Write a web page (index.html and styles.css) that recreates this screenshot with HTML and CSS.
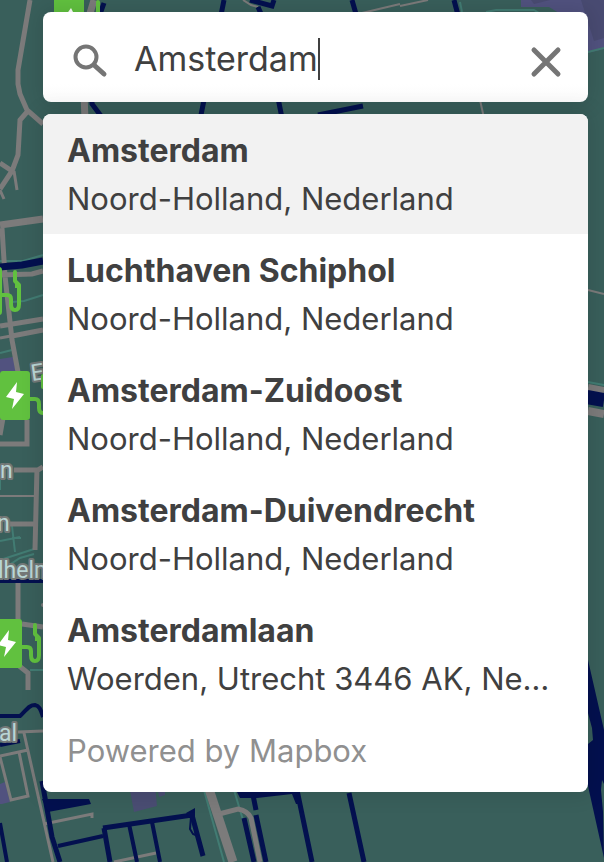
FILE: index.html
```html
<!DOCTYPE html>
<html lang="nl">
<head>
<meta charset="utf-8">
<meta name="viewport" content="width=device-width, initial-scale=1">
<title>Laadpalen zoeken</title>
<link rel="stylesheet" href="styles.css">
</head>
<body>
<svg class="map" viewBox="0 0 604 862" preserveAspectRatio="xMinYMin slice" aria-hidden="true">
  <rect width="604" height="862" fill="#395f5b"/>

  <g fill="#51527f">
    <path d="M521 0H604V49L587 53V30L549 7L521 7Z"/>
    <path d="M0 359L13 357L16 372H0Z"/>
    <path d="M0 784L5 782L10 802L2 804H0Z"/>
    <path d="M129 785L155 785L157 806L134 812Z" fill="#4a4d73"/>
    <path d="M157 785H165V795L159 797Z" fill="#4a4d73"/>
  </g>
  <path d="M581 0H604V38L594 41Z M531 0H550L534 4Z" fill="#494b72"/>

  <g fill="none" stroke="#427c73" stroke-width="2">
    <path d="M0 261L23 261L43 255M0 353L12 350M12 302L24 301L43 295M0 541L20 537M12 526L15 552M12 538L21 538M0 560L34 549M0 571L20 558L34 554M460 2L462 12M486 12L496 10H534L539 13M588 52L604 48M588 382L604 385M234 790L243 820M204 790L224 862M30 670H43M0 480V490"/>
  </g>

  <g fill="none" stroke="#7c7b7b">
    <path stroke-width="5" d="M30 0L18 70V84L20 94L27 110L43 124M27 112L20 120L18 155L12 171L0 189M12 171L0 163"/>
    <path stroke-width="3" d="M14 171L17 190M0 190L4 199M0 338L43 330"/>
    <path stroke-width="7" d="M0 225L43 219"/>
    <path stroke-width="5" d="M2 228L5 276L12 340L18 372M0 275L32 274L43 271M0 326L43 319M12 336L43 330M27 420V444H0M3 418L0 435M14 470L38 470L43 467M37 468L35 550M10 524H35M18 575V620M22 624L43 627M18 665L28 673V690"/>
    <path stroke-width="2" d="M0 496H36"/>
    <path stroke-width="3" d="M18 732L43 731M24 733L53 862M0 756L28 750M0 757L11 800L28 796L19 752M44 824L92 814V818M114 862L156 853"/>
    <path stroke-width="9" d="M208 786L233 862"/>
    <path stroke-width="5" d="M219 814L238 809Q248 811 251 818L260 862"/>
    <path stroke-width="7" d="M94 0L82 40L85 120"/>
    <path stroke-width="2" d="M400 6L428 0M362 13L400 4M480 100L484 118M588 290L604 294M243 0L251 5L258 7"/>
    <path stroke-width="8" d="M588 388L604 391M588 411L604 414"/>
  </g>
  <circle cx="43" cy="605" r="2" fill="#7c7b7b"/>

  <g fill="none" stroke="#03104f">
    <path stroke-width="7" d="M0 267L22 265L43 261"/>
    <path stroke-width="4" d="M0 716H20C28 708 30 705 35 705C40 706 41 711 43 717M0 745L20 741M0 581H43M0 823L7 862M58 846L103 836M129 824L137 862M152 822L160 862"/>
    <path stroke-width="5" d="M42 781L52 837L60 862M103 828L192 815L203 856M104 828L110 862M244 818L254 862M256 815L266 862M252 790L256 810M297 790L312 862M349 793L364 862M104 3L90 42L92 104L104 120M224 0L200 120M250 0L272 6L274 0M258 7L262 16M352 0L356 14M278 98L282 118M318 115L363 106M454 0L458 15"/>
    <path stroke-width="2" d="M191 817L190 829L193 834L198 836M258 7L262 20"/>
    <path stroke-width="14" d="M587 397L604 400"/>
  </g>
  <g fill="#03104f">
    <path d="M42 799L89 799L91 804L48 812Z M186 813L195 808V825Z M236 790H300V804H296L292 794L257 798H240Z"/>
    <path d="M588 660L604 730V784L602 780L601 790L603 812L604 858L588 786V744L593 740L592 728L588 713Z"/>
  </g>

  <g class="labels" font-size="23">
    <text x="32" y="381" transform="rotate(-8 32 381)">E</text>
    <text x="0" y="478">n</text>
    <text x="-3" y="531">n</text>
    <text x="-2" y="578">lhelm</text>
    <text x="-1" y="741">al</text>
  </g>

  <g fill="#61c13f">
    <path d="M54 0H84V20H54Z"/>
    <rect x="-27" y="267" width="29" height="48" rx="3"/>
    <rect x="0" y="371" width="30" height="49" rx="3"/>
    <rect x="-7" y="619" width="29" height="49" rx="3"/>
  </g>
  <g fill="none" stroke="#61c13f" stroke-width="4" stroke-linecap="round" stroke-linejoin="round">
    <path d="M15 272V281L19 285V304Q19 310 15 310Q11 310 11 304V299Q11 295 7 295H0"/>
    <path d="M43 376V387M30 399H35Q39 399 39 404V408Q39 413 43 413"/>
    <path d="M35 625V634L39 638V655Q39 661 35 661Q31 661 31 655V651Q31 647 27 647H22"/>
    <path d="M98 2V20"/>
  </g>
  <path d="M15 280L20 284V288H15Z M35 633L40 637V641H35Z" fill="#61c13f"/>
  <g fill="#fff">
    <path d="M17 382L6 397L14 399L12 409L24 394L16 392Z"/>
    <path d="M9 630L-2 645L6 647L4 657L16 642L8 640Z"/>
    <path d="M71 8L61 22H68L73 12Z"/>
  </g>
</svg>

<main class="geocoder">
  <form class="search" role="search">
    <svg class="search-icon" viewBox="0 0 36 36" aria-hidden="true">
      <circle cx="14" cy="14" r="10.5"/>
      <path d="M22 22L32 31"/>
    </svg>
    <div class="field">
      <input class="query" type="text" value="Amsterdam" aria-label="Zoeken" autocomplete="off" spellcheck="false">
      <span class="caret"></span>
    </div>
    <button class="clear" type="button" aria-label="Wissen">
      <svg class="clear-icon" viewBox="0 0 36 36" aria-hidden="true"><path d="M6 6L30 30M30 6L6 30"/></svg>
    </button>
  </form>

  <div class="results">
    <ul class="suggestions">
      <li><button class="suggestion active" type="button"><span class="title">Amsterdam</span><span class="address">Noord-Holland, Nederland</span></button></li>
      <li><button class="suggestion" type="button"><span class="title">Luchthaven Schiphol</span><span class="address">Noord-Holland, Nederland</span></button></li>
      <li><button class="suggestion" type="button"><span class="title">Amsterdam-Zuidoost</span><span class="address">Noord-Holland, Nederland</span></button></li>
      <li><button class="suggestion" type="button"><span class="title">Amsterdam-Duivendrecht</span><span class="address">Noord-Holland, Nederland</span></button></li>
      <li><button class="suggestion" type="button"><span class="title">Amsterdamlaan</span><span class="address">Woerden, Utrecht 3446 AK, Nederland</span></button></li>
    </ul>
    <p class="credit">Powered by Mapbox</p>
  </div>
</main>
</body>
</html>
```

FILE: styles.css
```css
* {
  box-sizing: border-box;
}

body {
  margin: 0;
  min-height: 100vh;
  background: #395f5b;
  color: #404040;
  font-family: Inter, "Liberation Sans", sans-serif;
  font-size: 31px;
  line-height: 48px;
  overflow: hidden;
}

.map {
  position: absolute;
  inset: 0;
  width: 100%;
  height: 100%;
}

.labels {
  fill: #b9d6d5;
  stroke: #747978;
  stroke-width: 4px;
  stroke-linejoin: round;
  paint-order: stroke;
  font-family: Roboto, sans-serif;
}

.geocoder {
  position: relative;
  display: flex;
  flex-direction: column;
  gap: 12px;
  padding: 12px 16px 12px 43px;
}

.search,
.results {
  background: #fff;
  border-radius: 8px;
  box-shadow: 0 0 20px 4px rgba(0, 0, 0, 0.1);
}

.search {
  display: flex;
  align-items: center;
  height: 90px;
  padding: 4px 24px 0 29px;
  background: linear-gradient(#fff 80%, #fafafa);
}

.search-icon {
  flex: none;
  width: 36px;
  height: 36px;
  margin-top: 4px;
  fill: none;
  stroke: #757575;
  stroke-width: 4;
  stroke-linecap: round;
}

.search-icon path {
  stroke-width: 5;
}

.field {
  position: relative;
  flex: 1;
  min-width: 0;
  margin-left: 26px;
}

.query {
  display: block;
  width: 100%;
  height: 48px;
  padding: 0;
  border: 0;
  outline: 0;
  background: transparent;
  color: inherit;
  font: inherit;
  font-size: 34px;
}

.caret {
  position: absolute;
  top: 3px;
  left: 184px;
  width: 2px;
  height: 42px;
  background: #404040;
}

.clear {
  flex: none;
  display: grid;
  padding: 0;
  margin-top: 6px;
  border: 0;
  background: transparent;
}

.clear-icon {
  width: 36px;
  height: 36px;
  fill: none;
  stroke: #757575;
  stroke-width: 5;
  stroke-linecap: round;
}

.results {
  overflow: hidden;
}

.suggestions {
  margin: 0;
  padding: 0;
  list-style: none;
}

.suggestion {
  display: block;
  width: 100%;
  padding: 13px 24px 11px;
  border: 0;
  background: transparent;
  color: inherit;
  font: inherit;
  text-align: left;
}

.suggestion.active {
  background: #f2f2f2;
}

.title,
.address {
  display: block;
  overflow: hidden;
  text-overflow: ellipsis;
  white-space: nowrap;
}

.title {
  font-size: 32px;
  font-weight: 700;
}

.credit {
  margin: 0;
  padding: 13px 24px 17px;
  color: #909090;
}
```
